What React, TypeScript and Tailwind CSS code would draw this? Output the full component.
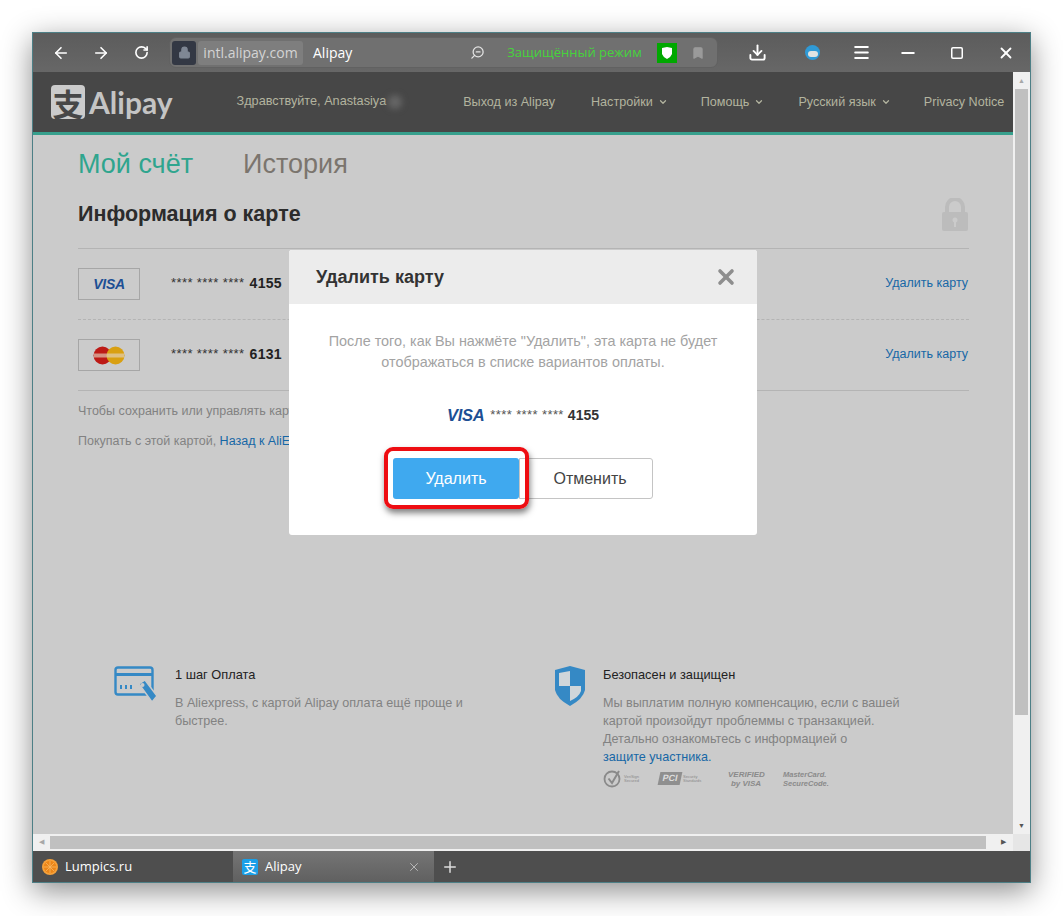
import { ArrowLeft, ArrowRight, RotateCw, ZoomOut, Download, Menu, Minus, Square, X, Plus, ChevronDown, Lock, Bookmark } from 'lucide-react';

const arial = 'font-["Liberation_Sans",Arial,sans-serif]';

const NavItem = ({ label, className }: { label: string; className: string }) => (
  <span className={`flex items-center gap-[5px] text-[12.6px] text-[#b3b49f] whitespace-nowrap ${className}`}>
    {label}
    <ChevronDown size={10} strokeWidth={3} />
  </span>
);

const VisaMark = ({ className }: { className: string }) => (
  <span className={`font-bold italic tracking-[-0.3px] text-[#1c4f94] ${className}`}>VISA</span>
);

const CardRow = ({ last, children }: { last: string; children: React.ReactNode }) => (
  <div className="flex h-[70px] items-center">
    <div className="flex h-[32px] w-[62px] items-center justify-center border border-[#a6a6a6]">{children}</div>
    <span className="ml-[31px] -translate-y-[1px] text-[13px] tracking-[0.4px] text-[#333]">**** **** ****</span>
    <span className="ml-[5px] -translate-y-[1px] text-[14px] font-bold tracking-[0.3px] text-[#222]">{last}</span>
    <span className="ml-auto mr-[1px] -translate-y-[1px] text-[12.5px] text-[#1667a6]">Удалить карту</span>
  </div>
);

const MasterMark = () => (
  <svg width="32" height="19" viewBox="0 0 32 19">
    <circle cx="9.5" cy="9.5" r="9" fill="#bd1a16" />
    <circle cx="22.5" cy="9.5" r="9" fill="#d9a012" />
    <rect x="1" y="7.5" width="30" height="4" fill="#e2d3c0" opacity="0.65" />
  </svg>
);

const Modal = () => (
  <div className="absolute left-[256px] top-[178px] h-[285px] w-[468px] overflow-hidden rounded-[3px] bg-white">
    <div className="flex h-[54px] items-center justify-between bg-[#ececec] pl-[27px] pr-[19px]">
      <span className="text-[18px] font-bold text-[#333]">Удалить карту</span>
      <X size={24} strokeWidth={3.6} className="text-[#8e8e8e]" />
    </div>
    <p className="mt-[27px] text-center text-[14.4px] leading-[21px] text-[#a3a3a3]">
      После того, как Вы нажмёте "Удалить", эта карта не будет
      <br />
      отображаться в списке вариантов оплаты.
    </p>
    <div className="mt-[32px] flex h-[21px] items-center justify-center">
      <VisaMark className="text-[16.5px]" />
      <span className="ml-[6px] -translate-y-[1px] text-[13px] tracking-[0.4px] text-[#555]">**** **** ****</span>
      <span className="ml-[4px] text-[14px] font-bold text-[#333]">4155</span>
    </div>
    <div className="relative ml-[104px] mt-[32px] flex h-[41px]">
      <button className="relative z-10 h-[41px] w-[126px] rounded-[3px] bg-[#3fa9ef] text-[16px] text-white">Удалить</button>
      <button className="h-[41px] w-[134px] rounded-r-[3px] border border-[#c4c4c4] pl-[8px] text-[16px] text-[#444]">Отменить</button>
      {/* red marker round the button */}
      <div className="absolute -left-[9px] -top-[11px] z-20 h-[62px] w-[145px] rounded-[9px] border-[4px] border-[#ee0d12] shadow-[1px_4px_6px_rgba(0,0,0,0.5)]" />
    </div>
  </div>
);

const Trust = () => (
  <div className="mt-[3px] flex items-center text-[#8a8a8a]">
    <svg width="19" height="19" viewBox="0 0 19 19" fill="none" stroke="#8a8a8a">
      <circle cx="9" cy="10" r="7.5" strokeWidth="1.8" />
      <path d="M5.5 9.5 L9 14 L16 2" strokeWidth="2" />
    </svg>
    <span className="ml-[2px] w-[24px] text-[4px] leading-[4px]">VeriSign Secured</span>
    <span className="ml-[11px] flex h-[13px] w-[22px] -skew-x-12 items-center justify-center bg-[#8f8f8f] text-[9px] font-bold text-[#ddd]">PCI</span>
    <span className="ml-[2px] w-[27px] text-[4px] leading-[4px]">Security Standards</span>
    <span className="ml-[18px] w-[36px] text-center text-[8px] font-bold italic leading-[9px]">
      VERIFIED
      <br />
      by VISA
    </span>
    <span className="ml-[19px] text-[7.5px] font-bold italic leading-[9px]">
      MasterCard.
      <br />
      SecureCode.
    </span>
  </div>
);

export default function App() {
  return (
    <div className={`h-[916px] w-[1063px] overflow-hidden bg-white pl-[32px] pt-[32px] ${arial}`}>
      <div className="flex h-[851px] w-[999px] flex-col border border-[#4d7f86] shadow-[0_8px_28px_rgba(0,0,0,0.45)]">
        {/* browser toolbar */}
        <div className="flex h-[39px] shrink-0 items-center bg-gradient-to-b from-[#5c5c5c] to-[#676767] font-['Open_Sans',sans-serif] text-white">
          <ArrowLeft size={18} strokeWidth={2.2} className="ml-[19px]" />
          <ArrowRight size={18} strokeWidth={2.2} className="ml-[22px]" />
          <RotateCw size={15} strokeWidth={2.6} className="ml-[24px]" />
          <div className="ml-[20px] flex h-[31px] w-[549px] items-center rounded-[7px] border border-[#616161] bg-[#707070] pl-[2px]">
            <div className="flex h-[24px] w-[24px] items-center justify-center rounded-[3px] bg-[#333844]">
              <Lock size={13} fill="#7f8794" className="text-[#7f8794]" />
            </div>
            <div className="ml-[2px] flex h-[24px] w-[105px] items-center justify-center rounded-[3px] bg-[#7e7e7e] text-[14px] text-[#d4d4d4]">intl.alipay.com</div>
            <span className="ml-[10px] text-[14px]">Alipay</span>
            <ZoomOut size={15} className="ml-[118px] -scale-x-100 text-[#e4e4e4]" />
            <span className="ml-[22px] whitespace-nowrap text-[13px] text-[#46d43c]">Защищённый режим</span>
            <div className="ml-auto flex h-[20px] w-[20px] items-center justify-center bg-[#00a800]">
              <svg width="10" height="12" viewBox="0 0 10 12"><path d="M0 1 L5 0 L10 1 V7 Q9 10 5 12 Q1 10 0 7Z" fill="#fff" /></svg>
            </div>
            <Bookmark size={14} fill="#9a9a9a" className="ml-[14px] mr-[12px] text-[#9a9a9a]" />
          </div>
          <Download size={19} strokeWidth={2.4} className="ml-[30px]" />
          <div className="relative ml-[38px] h-[15px] w-[15px] overflow-hidden rounded-full bg-[#2f9ad6]">
            <div className="absolute bottom-[3px] left-[3px] h-[6px] w-[10px] rounded-full bg-[#dfe3e2]" />
          </div>
          <Menu size={19} strokeWidth={2.4} className="ml-[32px]" />
          <Minus size={20} strokeWidth={2.2} className="ml-[27px]" />
          <Square size={14} strokeWidth={2.6} className="ml-[32px]" />
          <X size={18} strokeWidth={2.4} className="ml-[33px]" />
        </div>

        <div className="flex min-h-0 flex-1">
          <div className="relative min-w-0 flex-1 overflow-hidden bg-[#cbcbcb]">
            {/* site header */}
            <div className="flex h-[63px] items-center border-b-[3px] border-[#37a08d] bg-[#474747]">
              <div className="ml-[18px] flex h-[34px] w-[34px] shrink-0 items-center justify-center rounded-[4px] bg-[#cbcbcb] font-['Noto_Sans_CJK_SC',sans-serif] text-[31px] font-bold leading-none text-[#474747]">支</div>
              <span className="ml-[4px] font-['Lato',sans-serif] text-[30px] font-bold leading-none text-[#c4c4c4]">Alipay</span>
              <span className="ml-[64px] whitespace-nowrap text-[12.7px] text-[#b3b49f]">Здравствуйте, Anastasiya</span>
              <span className="ml-[2px] h-[14px] w-[14px] shrink-0 rounded-full bg-[#666] blur-[3px]" />
              <span className="ml-[61px] whitespace-nowrap text-[12.6px] text-[#b3b49f]">Выход из Alipay</span>
              <NavItem label="Настройки" className="ml-[36px]" />
              <NavItem label="Помощь" className="ml-[33px]" />
              <NavItem label="Русский язык" className="ml-[34px]" />
              <span className="ml-[33px] whitespace-nowrap text-[12.6px] text-[#b3b49f]">Privacy Notice</span>
            </div>

            <div className="pl-[45px] pr-[44px]">
              <div className="mt-[13px] flex text-[27px] leading-[32px]">
                <span className="text-[#2fa58e]">Мой счёт</span>
                <span className="ml-[50px] text-[#7b756e]">История</span>
              </div>
              <div className="mt-[17px] flex h-[34px] items-center justify-between">
                <h2 className="text-[21.5px] font-bold text-[#2c2c2c]">Информация о карте</h2>
                <svg width="28" height="34" viewBox="0 0 28 34" className="mt-[2px]">
                  <path d="M6 15 V9 a8 8 0 0 1 16 0 V15" fill="none" stroke="#bcbcbc" strokeWidth="4" />
                  <rect x="1" y="14" width="26" height="19" rx="2" fill="#bcbcbc" />
                  <circle cx="14" cy="22" r="2.5" fill="#cbcbcb" />
                  <rect x="13" y="23" width="2" height="6" fill="#cbcbcb" />
                </svg>
              </div>
              <div className="mt-[17px] border-t border-[#b4b4b4]">
                <CardRow last="4155">
                  <VisaMark className="text-[14px]" />
                </CardRow>
                <div className="border-t border-dashed border-[#b4b4b4]" />
                <CardRow last="6131">
                  <MasterMark />
                </CardRow>
              </div>
              <div className="border-t border-[#b4b4b4]" />
              <p className="mt-[11px] whitespace-nowrap text-[12.5px] leading-[18px] text-[#828282]">Чтобы сохранить или управлять картами</p>
              <p className="mt-[12px] whitespace-nowrap text-[12.5px] leading-[18px] text-[#828282]">
                Покупать с этой картой, <span className="text-[#1667a6]">Назад к AliExpress</span>
              </p>

              {/* footer features */}
              <div className="ml-[36px] mt-[216px] flex">
                <div className="flex w-[441px]">
                  <svg width="44" height="38" viewBox="0 0 44 38" className="shrink-0">
                    <rect x="1.5" y="1.5" width="37" height="27" rx="2.5" fill="none" stroke="#3589c5" strokeWidth="2.4" />
                    <rect x="2" y="7" width="36" height="3" fill="#3589c5" />
                    <path d="M6 19h2v4H6zM11 19h2v4h-2zM16 19h2v4h-2z" fill="#3589c5" />
                    <path d="M25 18 L31 14 L43 30 L38 36 Z" fill="#3589c5" stroke="#cbcbcb" strokeWidth="1.5" />
                    <circle cx="28.5" cy="19" r="2" fill="#cbcbcb" />
                  </svg>
                  <div className="ml-[17px] w-[300px]">
                    <div className="text-[12.8px] leading-[18px] text-[#222]">1 шаг Оплата</div>
                    <p className="mt-[10px] text-[12.6px] leading-[18px] text-[#828282]">В Aliexpress, с картой Alipay оплата ещё проще и быстрее.</p>
                  </div>
                </div>
                <div className="flex">
                  <svg width="30" height="40" viewBox="0 0 30 40" className="shrink-0">
                    <path d="M15 0 L30 4 V24 Q28 33 15 40 Q2 33 0 24 V4 Z" fill="#3589c5" />
                    <path d="M15 5 V20 H4 V7 Z M15 20 H26 V25 Q24 31 15 35 Z" fill="#cfd6da" />
                  </svg>
                  <div className="ml-[18px] w-[310px]">
                    <div className="text-[12.8px] leading-[18px] text-[#222]">Безопасен и защищен</div>
                    <p className="mt-[10px] text-[12.6px] leading-[18px] text-[#828282]">
                      Мы выплатим полную компенсацию, если с вашей
                      <br />
                      картой произойдут проблеммы с транзакцией.
                      <br />
                      Детально ознакомьтесь с информацией о
                      <br />
                      <span className="text-[#1667a6]">защите участника.</span>
                    </p>
                    <Trust />
                  </div>
                </div>
              </div>
            </div>
            <Modal />
          </div>
          {/* vertical scrollbar */}
          <div className="flex w-[17px] shrink-0 flex-col items-center bg-[#f0f0f0] text-[7px] leading-[17px]">
            <div className="h-[17px] text-[#a8a8a8]">▲</div>
            <div className="h-[626px] w-[13px] bg-[#c0c0c0]" />
            <div className="mt-auto h-[17px] text-[#555]">▼</div>
          </div>
        </div>

        {/* horizontal scrollbar */}
        <div className="flex h-[17px] shrink-0 items-center bg-[#f0f0f0]">
          <span className="w-[17px] text-center text-[7px] text-[#a8a8a8]">◀</span>
          <div className="h-[13px] w-[936px] bg-[#c0c0c0]" />
          <span className="w-[27px] pl-[8px] text-center text-[7px] text-[#555]">▶</span>
          <div className="h-[17px] w-[17px] bg-[#e6e6e6]" />
        </div>

        {/* tab strip */}
        <div className="flex h-[31px] shrink-0 items-center bg-[#4e4e4e] font-['Open_Sans',sans-serif] text-[13px] text-white">
          <div className="flex h-full w-[200px] items-center pl-[9px]">
            <svg width="16" height="16" viewBox="0 0 16 16">
              <circle cx="8" cy="8" r="8" fill="#f6a13a" />
              <circle cx="8" cy="8" r="6.2" fill="#ec8618" />
              <path d="M8 2v12M2 8h12M3.8 3.8l8.4 8.4M12.2 3.8l-8.4 8.4" stroke="#f8b765" strokeWidth="0.8" />
            </svg>
            <span className="ml-[7px]">Lumpics.ru</span>
          </div>
          <div className="flex h-full w-[201px] items-center bg-gradient-to-b from-[#757575] to-[#606060] pl-[9px] pr-[13px]">
            <div className="flex h-[16px] w-[16px] items-center justify-center rounded-[2px] bg-[#1ba0e8] font-['Noto_Sans_CJK_SC',sans-serif] text-[13px] leading-none">支</div>
            <span className="ml-[7px]">Alipay</span>
            <X size={14} strokeWidth={1.4} className="ml-auto text-[#c8c8c8]" />
          </div>
          <Plus size={18} strokeWidth={2} className="ml-[7px] text-[#ddd]" />
        </div>
      </div>
    </div>
  );
}
